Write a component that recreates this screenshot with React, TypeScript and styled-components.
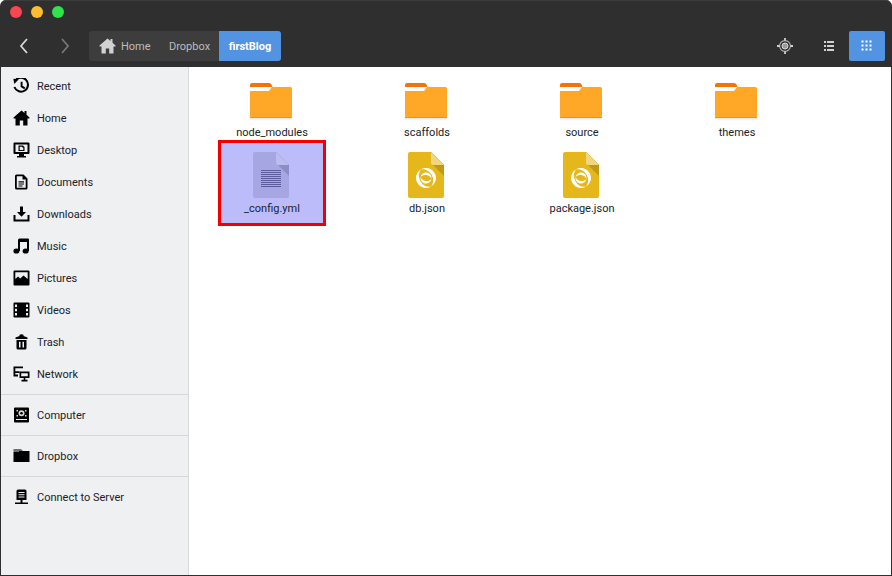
import styled, { createGlobalStyle } from "styled-components";
import type { ReactNode } from "react";

const GlobalStyle = createGlobalStyle`
  html, body {
    margin: 0;
    padding: 0;
    background: #ffffff;
  }
  * {
    box-sizing: border-box;
  }
`;

const fontStack = `Roboto, "Noto Sans", sans-serif`;

const Window = styled.div`
  width: 892px;
  height: 576px;
  display: flex;
  flex-direction: column;
  background: #2f2f2f;
  border-radius: 6px 6px 0 0;
  overflow: hidden;
  font-family: ${fontStack};
`;

const Header = styled.header`
  height: 67px;
  flex: none;
  display: flex;
  flex-direction: column;
  border-top: 1px solid #3c3c3c;
`;

const TitleRow = styled.div`
  height: 30px;
  flex: none;
  display: flex;
  align-items: center;
  gap: 9px;
  padding: 0 0 8px 10px;
`;

const TrafficLight = styled.span<{ $color: string }>`
  width: 12px;
  height: 12px;
  border-radius: 50%;
  background: ${(p) => p.$color};
`;

const Toolbar = styled.div`
  height: 30px;
  flex: none;
  display: flex;
  align-items: center;
  padding: 0 7px 0 3px;
`;

const NavButton = styled.span<{ $dim?: boolean }>`
  width: 41px;
  height: 30px;
  display: flex;
  align-items: center;
  justify-content: center;
  color: ${(p) => (p.$dim ? "#777777" : "#d6d6d6")};
`;

const PathBar = styled.nav`
  height: 30px;
  display: flex;
  align-items: stretch;
  margin-left: 4px;
  background: #3d3d3d;
  border-radius: 3px;
  overflow: hidden;
`;

const Crumb = styled.span<{ $active?: boolean; $width: number }>`
  width: ${(p) => p.$width}px;
  display: flex;
  align-items: center;
  justify-content: ${(p) => (p.$active ? "center" : "flex-start")};
  gap: 5px;
  padding-left: ${(p) => (p.$active ? 0 : 10)}px;
  font-size: 11px;
  font-weight: ${(p) => (p.$active ? 700 : 400)};
  color: ${(p) => (p.$active ? "#ffffff" : "#bcbcbc")};
  background: ${(p) => (p.$active ? "#5294e2" : "transparent")};
`;

const Spacer = styled.div`
  flex: 1;
`;

const ToolButton = styled.span<{ $active?: boolean }>`
  width: 36px;
  height: 30px;
  display: flex;
  align-items: center;
  justify-content: center;
  border-radius: 2px;
  margin: ${(p) => (p.$active ? "0" : "0 2px 0 6px")};
  background: ${(p) => (p.$active ? "#5294e2" : "transparent")};
  color: ${(p) => (p.$active ? "#ffffff" : "#d0d0d0")};
`;

const Body = styled.div`
  flex: 1;
  min-height: 0;
  display: flex;
  margin: 0 1px 1px 1px;
  background: #ffffff;
`;

const Sidebar = styled.aside`
  width: 188px;
  flex: none;
  padding-top: 3px;
  background: #eff0f2;
  border-right: 1px solid #d8d9dc;
`;

const SidebarRow = styled.div`
  height: 32px;
  display: flex;
  align-items: center;
  gap: 7px;
  padding-left: 12px;
  font-size: 11px;
  color: #20222a;
`;

const Separator = styled.div`
  height: 1px;
  margin: 4px 0;
  background: #d6d7d9;
`;

const Content = styled.main`
  flex: 1;
  display: grid;
  grid-template-columns: repeat(4, 108px);
  grid-template-rows: 68px 86px;
  column-gap: 47px;
  padding: 5px 0 0 29px;
`;

const Cell = styled.div<{ $selected?: boolean; $top: number }>`
  display: flex;
  flex-direction: column;
  align-items: center;
  padding-top: ${(p) => p.$top}px;
  border: 3px solid ${(p) => (p.$selected ? "#f00000" : "transparent")};
  background: ${(p) => (p.$selected ? "#bcbcfb" : "transparent")};
`;

const CellIcon = styled.div`
  position: relative;
  margin-right: 2px;
`;

const PageOverlay = styled.svg`
  position: absolute;
`;

const FileName = styled.span<{ $gap: number }>`
  margin-top: ${(p) => p.$gap}px;
  font-size: 11px;
  line-height: 16px;
  color: #20222a;
`;

const Icon16 = ({ children }: { children: ReactNode }) => (
  <svg width="17" height="16" viewBox="0 0 17 16" fill="#000000" style={{ flex: "none" }}>
    {children}
  </svg>
);

const sidebarIcons: Record<string, ReactNode> = {
  recent: (
    <>
      <path d="M1.8 3.4 A7 7 0 1 1 1.4 9" fill="none" stroke="#000" strokeWidth="2" />
      <path d="M0.4 0.8 L5.6 1.4 L1.2 6 Z" />
      <path d="M8.6 3.8 V8.4 L11.8 10.4" fill="none" stroke="#000" strokeWidth="1.9" />
    </>
  ),
  home: (
    <path d="M8.5 0.5 L11.5 3 V1 H13.5 V4.8 L16.5 7.6 V8.4 H14.5 V15.5 H10.2 V10.5 H6.8 V15.5 H2.5 V8.4 H0.5 V7.6 Z" />
  ),
  desktop: (
    <>
      <path
        fillRule="evenodd"
        d="M1.5 0.5 H15.5 Q16.5 0.5 16.5 1.5 V11 Q16.5 12 15.5 12 H1.5 Q0.5 12 0.5 11 V1.5 Q0.5 0.5 1.5 0.5 Z M2.5 2.5 V10 H14.5 V2.5 Z"
      />
      <path d="M6 12 H11 V14 H13 V15.5 H4 V14 H6 Z" />
      <path
        fillRule="evenodd"
        d="M5.5 3.5 H10 L11.5 5 V9 H5.5 Z M6.7 4.7 V7.9 H10.3 V5.6 H9.2 V4.7 Z"
      />
    </>
  ),
  documents: (
    <>
      <path
        fillRule="evenodd"
        d="M3.5 0.5 H10.5 L14.5 4.5 V14 Q14.5 15.5 13 15.5 H3.5 Q2 15.5 2 14 V2 Q2 0.5 3.5 0.5 Z M3.8 2.3 V13.7 H12.7 V5.5 H9.5 V2.3 Z"
      />
      <path d="M5.5 7.2 H11 V8.4 H5.5 Z M5.5 9.4 H11 V10.6 H5.5 Z M5.5 11.4 H9.5 V12.4 H5.5 Z" />
    </>
  ),
  downloads: (
    <>
      <path d="M7 0.5 H10 V6 H13 L8.5 10.8 L4 6 H7 Z" />
      <path d="M0.5 9 H2.5 V13.5 H14.5 V9 H16.5 V15.5 H0.5 Z" />
    </>
  ),
  music: (
    <>
      <path d="M5 2 Q5 0.5 6.5 0.5 H15 Q16 0.5 16 1.5 V13 H14 V4 H7 V13 H5 Z" />
      <ellipse cx="3.4" cy="13" rx="3" ry="2.6" />
      <ellipse cx="12.6" cy="13" rx="3" ry="2.6" />
    </>
  ),
  pictures: (
    <path
      fillRule="evenodd"
      d="M1.5 0.5 H15.5 Q16.5 0.5 16.5 1.5 V14.5 Q16.5 15.5 15.5 15.5 H1.5 Q0.5 15.5 0.5 14.5 V1.5 Q0.5 0.5 1.5 0.5 Z M2.3 2.3 V9 L5 6.6 L7.2 8.6 L10.5 5.4 L14.7 9 V2.3 Z"
    />
  ),
  videos: (
    <path
      fillRule="evenodd"
      d="M1.5 0.5 H15.5 Q16.5 0.5 16.5 1.5 V14.5 Q16.5 15.5 15.5 15.5 H1.5 Q0.5 15.5 0.5 14.5 V1.5 Q0.5 0.5 1.5 0.5 Z M2 2.5 V5 H4 V2.5 Z M2 6.8 V9.2 H4 V6.8 Z M2 11 V13.5 H4 V11 Z M13 2.5 V5 H15 V2.5 Z M13 6.8 V9.2 H15 V6.8 Z M13 11 V13.5 H15 V11 Z"
    />
  ),
  trash: (
    <>
      <path d="M6.5 0.8 Q8.5 -0.2 10.5 0.8 V2 L14.5 3.4 V5 H2.5 V3.4 L6.5 2 Z" />
      <path
        fillRule="evenodd"
        d="M3.5 6 H13.5 V14 Q13.5 15.5 12 15.5 H5 Q3.5 15.5 3.5 14 Z M6 7.8 V13.5 H7.5 V7.8 Z M9.5 7.8 V13.5 H11 V7.8 Z"
      />
    </>
  ),
  network: (
    <>
      <path d="M0.5 0.5 H10 V2.3 H2.3 V5.2 H6.5 V7 H2.3 V8.6 H5 V10.4 H0.5 V5.2 H0.5 Z" />
      <path
        fillRule="evenodd"
        d="M6.5 5.5 H16.5 V12 H12.3 V13.8 H14.5 V15.5 H8.5 V13.8 H10.7 V12 H6.5 Z M8.2 7.2 V10.3 H14.8 V7.2 Z"
      />
    </>
  ),
  computer: (
    <>
      <path
        fillRule="evenodd"
        d="M2 0.5 H15 Q16 0.5 16 1.5 V14.5 Q16 15.5 15 15.5 H2 Q1 15.5 1 14.5 V1.5 Q1 0.5 2 0.5 Z M3 12 V13 H14 V12 Z"
      />
      <circle cx="8.5" cy="6.2" r="3" fill="#d8d8d8" />
      <circle cx="8.5" cy="6.2" r="1.3" fill="#000" />
      <path d="M3.5 3 H5 V4.5 H3.5 Z M12 3 H13.5 V4.5 H12 Z M3.5 8 H5 V9.5 H3.5 Z M12 8 H13.5 V9.5 H12 Z" fill="#d8d8d8" />
    </>
  ),
  dropbox: (
    <>
      <path d="M0.5 1 H8 L10 3 H5 V4 H0.5 Z" fill="#6e6e6e" />
      <path d="M0.5 4 H5 L6 3 H16.5 V14 H0.5 Z" />
    </>
  ),
  server: (
    <>
      <path
        fillRule="evenodd"
        d="M5 0.5 H12 Q13.5 0.5 13.5 2 V11 H3.5 V2 Q3.5 0.5 5 0.5 Z M5.5 3 V4 H11.5 V3 Z M5.5 5.2 V6.2 H11.5 V5.2 Z M5.5 7.4 V8.4 H11.5 V7.4 Z"
      />
      <path d="M7.5 11 H9.5 V13.5 H15 V15 H2 V13.5 H7.5 Z" />
    </>
  ),
};

const Folder = () => (
  <svg width="42" height="38" viewBox="0 0 42 38" style={{ display: "block" }}>
    <defs>
      <linearGradient id="folder-shadow" x1="0" y1="0" x2="0" y2="1">
        <stop offset="0" stopColor="#000" stopOpacity="0.1" />
        <stop offset="1" stopColor="#000" stopOpacity="0" />
      </linearGradient>
    </defs>
    <rect x="0" y="35" width="42" height="3" fill="url(#folder-shadow)" />
    <path d="M0 2 Q0 0 2 0 H19 Q21 0 21.5 1.5 L22.5 4 H0 Z" fill="#f27501" />
    <rect x="3" y="5" width="18" height="3" fill="#ffffff" />
    <path d="M0 8 H19 L22 4 H40.5 Q42 4 42 5.5 V33 Q42 35 40 35 H2 Q0 35 0 33 Z" fill="#ffa726" />
    <rect x="0" y="34" width="42" height="1" fill="#ef9018" />
  </svg>
);

const Page = ({ body, fold, flap }: { body: string; fold: string; flap: string }) => (
  <svg width="36" height="46" viewBox="0 0 36 46" style={{ display: "block" }}>
    <path d="M2 0 H23 L36 13 V44 Q36 46 34 46 H2 Q0 46 0 44 V2 Q0 0 2 0 Z" fill={body} />
    <path d="M23 0 L36 13 V24 L23 11 Z" fill={fold} />
    <path d="M23 0 L36 13 H25 Q23 13 23 11 Z" fill={flap} />
  </svg>
);

const TextFile = () => (
  <CellIcon>
    <Page body="#a6a6e2" fold="#8c8cc8" flap="#bcbcf0" />
    <PageOverlay width="20" height="18" viewBox="0 0 20 18" style={{ left: 8, top: 18 }}>
      {[0, 2, 4, 6, 8, 10, 12, 14, 16].map((y) => (
        <rect key={y} x="0" y={y} width="20" height="1" fill="#5c5c9c" />
      ))}
    </PageOverlay>
  </CellIcon>
);

// Outer and inner crescents of the swirl, each drawn twice at opposite angles
const outerCrescent = "M11 1 A10 10 0 0 0 11 21 A11 11 0 0 1 11 1 Z";
const innerCrescent = "M11 5.5 A5.5 5.5 0 0 0 11 16.5 A6.5 6.5 0 0 1 11 5.5 Z";

const JsonFile = () => (
  <CellIcon>
    <Page body="#e5b71a" fold="#c09a17" flap="#f0d67f" />
    <PageOverlay width="22" height="22" viewBox="0 0 22 22" fill="#ffffff" style={{ left: 7, top: 15 }}>
      <path d={outerCrescent} transform="rotate(-30 11 11)" />
      <path d={outerCrescent} transform="rotate(150 11 11)" />
      <path d={innerCrescent} transform="rotate(100 11 11)" />
      <path d={innerCrescent} transform="rotate(280 11 11)" />
    </PageOverlay>
  </CellIcon>
);

const sidebarGroups: { icon: string; label: string }[][] = [
  [
    { icon: "recent", label: "Recent" },
    { icon: "home", label: "Home" },
    { icon: "desktop", label: "Desktop" },
    { icon: "documents", label: "Documents" },
    { icon: "downloads", label: "Downloads" },
    { icon: "music", label: "Music" },
    { icon: "pictures", label: "Pictures" },
    { icon: "videos", label: "Videos" },
    { icon: "trash", label: "Trash" },
    { icon: "network", label: "Network" },
  ],
  [{ icon: "computer", label: "Computer" }],
  [{ icon: "dropbox", label: "Dropbox" }],
  [{ icon: "server", label: "Connect to Server" }],
];

const folders = ["node_modules", "scaffolds", "source", "themes"];

export default function App() {
  return (
    <>
      <GlobalStyle />
      <Window>
        <Header>
          <TitleRow>
            <TrafficLight $color="#f9464f" />
            <TrafficLight $color="#fdbe2e" />
            <TrafficLight $color="#30e24c" />
          </TitleRow>
          <Toolbar>
            <NavButton>
              <svg width="10" height="16" viewBox="0 0 10 16">
                <path d="M8 1 L2 8 L8 15" fill="none" stroke="currentColor" strokeWidth="1.8" />
              </svg>
            </NavButton>
            <NavButton $dim>
              <svg width="10" height="16" viewBox="0 0 10 16">
                <path d="M2 1 L8 8 L2 15" fill="none" stroke="currentColor" strokeWidth="1.8" />
              </svg>
            </NavButton>
            <PathBar>
              <Crumb $width={70}>
                <svg width="17" height="16" viewBox="0 0 17 16" fill="#d2d2d2" style={{ flex: "none" }}>
                  <path d="M8.5 0.5 L11.5 3 V1 H13.5 V4.8 L16.5 7.6 V8.4 H14.5 V15.5 H10.2 V10.5 H6.8 V15.5 H2.5 V8.4 H0.5 V7.6 Z" />
                </svg>
                Home
              </Crumb>
              <Crumb $width={60}>Dropbox</Crumb>
              <Crumb $active $width={62}>firstBlog</Crumb>
            </PathBar>
            <Spacer />
            <ToolButton>
              <svg width="16" height="16" viewBox="0 0 16 16" fill="none" stroke="currentColor">
                <circle cx="8" cy="8" r="5.4" strokeWidth="1.1" stroke="#b8b8b8" />
                <circle cx="8" cy="8" r="3" fill="#9a9a9a" stroke="#d8d8d8" strokeWidth="1" />
                <path d="M8 0 V2.6 M8 13.4 V16 M0 8 H2.6 M13.4 8 H16" strokeWidth="1.8" />
              </svg>
            </ToolButton>
            <ToolButton>
              <svg width="12" height="12" viewBox="0 0 12 12" fill="currentColor">
                <path d="M1 1 H3 V3 H1 Z M1 5 H3 V7 H1 Z M1 9 H3 V11 H1 Z M4 1 H11 V3 H4 Z M4 5 H11 V7 H4 Z M4 9 H11 V11 H4 Z" />
              </svg>
            </ToolButton>
            <ToolButton $active>
              <svg width="12" height="12" viewBox="0 0 12 12" fill="currentColor">
                {[1, 5, 9].flatMap((y) =>
                  [1, 5, 9].map((x) => <rect key={`${x}-${y}`} x={x - 0.5} y={y - 0.5} width="2" height="2" />),
                )}
              </svg>
            </ToolButton>
          </Toolbar>
        </Header>
        <Body>
          <Sidebar>
            {sidebarGroups.map((group, index) => (
              <div key={group[0].label}>
                {index > 0 && <Separator />}
                {group.map((item) => (
                  <SidebarRow key={item.label}>
                    <Icon16>{sidebarIcons[item.icon]}</Icon16>
                    {item.label}
                  </SidebarRow>
                ))}
              </div>
            ))}
          </Sidebar>
          <Content>
            {folders.map((name) => (
              <Cell key={name} $top={8}>
                <CellIcon>
                  <Folder />
                </CellIcon>
                <FileName $gap={4}>{name}</FileName>
              </Cell>
            ))}
            <Cell $selected $top={9}>
              <TextFile />
              <FileName $gap={3}>_config.yml</FileName>
            </Cell>
            <Cell $top={9}>
              <JsonFile />
              <FileName $gap={3}>db.json</FileName>
            </Cell>
            <Cell $top={9}>
              <JsonFile />
              <FileName $gap={3}>package.json</FileName>
            </Cell>
          </Content>
        </Body>
      </Window>
    </>
  );
}
